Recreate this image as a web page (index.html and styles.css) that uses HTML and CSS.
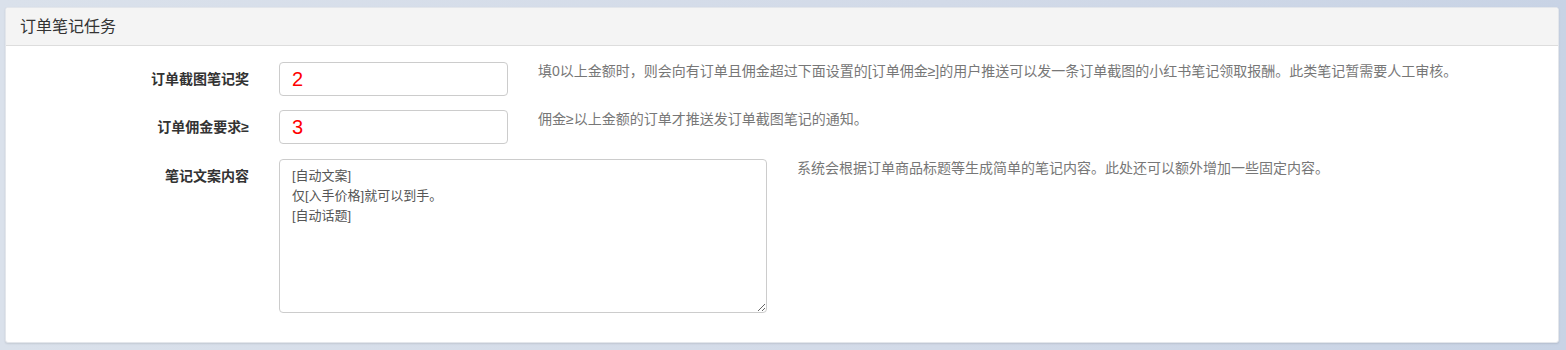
FILE: index.html
```html
<!DOCTYPE html>
<html lang="zh-CN">
<head>
  <meta charset="UTF-8" />
  <title>订单笔记任务</title>
  <link rel="stylesheet" href="styles.css">
</head>
<body>
  <div class="panel">
    <div class="panel-heading">订单笔记任务</div>
    <div class="panel-body">
      <div class="form-row">
        <label class="form-label">订单截图笔记奖</label>
        <input class="form-input" type="text" value="2">
        <div class="help">填0以上金额时，则会向有订单且佣金超过下面设置的[订单佣金≥]的用户推送可以发一条订单截图的小红书笔记领取报酬。此类笔记暂需要人工审核。</div>
      </div>
      <div class="form-row">
        <label class="form-label">订单佣金要求≥</label>
        <input class="form-input" type="text" value="3">
        <div class="help">佣金≥以上金额的订单才推送发订单截图笔记的通知。</div>
      </div>
      <div class="form-row last">
        <label class="form-label">笔记文案内容</label>
        <textarea class="form-text">[自动文案]
仅[入手价格]就可以到手。
[自动话题]</textarea>
        <div class="help">系统会根据订单商品标题等生成简单的笔记内容。此处还可以额外增加一些固定内容。</div>
      </div>
    </div>
  </div>
</body>
</html>
```

FILE: styles.css
```css
:root {
  --border: #ddd;
  --input-border: #ccc;
  --text: #333;
  --text-soft: #777;
}
html, body {
  margin: 0;
  padding: 0;
  height: 350px;
  overflow: hidden;
}
body {
  background: linear-gradient(90deg, #dae1eb 0%, #d2dae8 60%, #c8d3e5 100%);
  padding: 7px 7px 7px 5px;
  box-sizing: border-box;
  font-family: 'Liberation Sans', 'Noto Sans CJK SC', sans-serif;
  font-size: 14px;
  color: var(--text);
}
.panel {
  background: #fff;
  border-radius: 3px;
  box-shadow: 0 1px 2px rgba(0,0,0,0.1);
  border: 1px solid #e3e6eb;
  box-sizing: border-box;
  height: 336px;
  overflow: hidden;
}
.panel-heading {
  height: 37px;
  line-height: 37px;
  padding: 0 14px;
  background: #f4f4f4;
  border-bottom: 1px solid var(--border);
  font-size: 16px;
  color: #333;
}
.panel-body {
  padding: 16px 0 30px 0;
}
.form-row {
  display: flex;
  align-items: flex-start;
  margin-bottom: 14px;
}
.form-row.last { margin-top: 15px; margin-bottom: 0; }
.form-label {
  width: 243px;
  flex: none;
  text-align: right;
  font-weight: bold;
  padding-top: 7px;
  line-height: 20px;
  margin-right: 30px;
}
.form-input {
  width: 229px;
  height: 34px;
  box-sizing: border-box;
  flex: none;
  border: 1px solid var(--input-border);
  border-radius: 4px;
  padding: 0 12px;
  font-family: 'Liberation Sans', sans-serif;
  font-size: 20px;
  color: #f00;
  outline: none;
}
.form-text {
  width: 488px;
  height: 154px;
  box-sizing: border-box;
  flex: none;
  border: 1px solid var(--input-border);
  border-radius: 4px;
  padding: 6px 12px;
  font-family: 'Liberation Sans', 'Noto Sans CJK SC', sans-serif;
  font-size: 13px;
  line-height: 20px;
  color: #555;
  outline: none;
  margin: 0;
}
.help {
  margin-left: 30px;
  line-height: 18px;
  color: var(--text-soft);
  font-size: 14px;
  white-space: nowrap;
}
```
